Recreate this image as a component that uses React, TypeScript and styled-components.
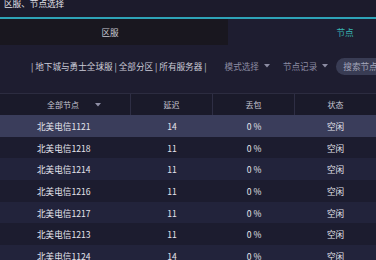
import React from 'react';
import styled, { createGlobalStyle } from 'styled-components';

const GlobalStyle = createGlobalStyle`
  html, body {
    margin: 0;
    padding: 0;
    background: #1e1d30;
    overflow: hidden;
  }
  body {
    font-family: "Noto Sans CJK SC", "Noto Sans", sans-serif;
  }
`;

const Page = styled.div`
  width: 462px;
  height: 260px;
  background: #1e1d30;
  color: #d8d8e2;
`;

const TitleBar = styled.div`
  height: 17px;
  overflow: hidden;
  background: #1c1b2c;
  border-bottom: 2px solid #2ea3b8;
  padding-left: 4px;
`;

const TitleText = styled.div`
  font-size: 8.6px;
  line-height: 12px;
  margin-top: -3px;
  color: #e2e2ea;
`;

const Tabs = styled.div`
  display: grid;
  grid-template-columns: 228px 1fr;
  height: 26px;
`;

const Tab = styled.div<{ $active?: boolean }>`
  display: flex;
  align-items: center;
  justify-content: center;
  font-size: 8.6px;
  padding-right: ${(p) => (p.$active ? '0' : '8px')};
  background: ${(p) => (p.$active ? '#1e1d30' : '#19171f')};
  color: ${(p) => (p.$active ? '#38b6b4' : '#c8c8d2')};
`;

const FilterBar = styled.div`
  height: 42px;
  display: flex;
  align-items: center;
  padding-left: 31px;
  font-size: 8.6px;
  white-space: nowrap;
`;

const Crumbs = styled.span`
  color: #ccccd8;
  margin-right: 18px;
`;

const Dropdown = styled.span`
  display: inline-flex;
  align-items: center;
  gap: 5px;
  color: #8c8ca2;
  margin-right: 13px;
  &:last-of-type {
    margin-right: 8px;
  }
`;

const SearchPill = styled.div`
  height: 17px;
  padding: 0 10px 0 7px;
  border-radius: 9px;
  background: #393c54;
  color: #a4a7bc;
  display: flex;
  align-items: center;
`;

const Table = styled.div`
  margin-top: 6px;
  width: 376px;
`;

const HeaderRow = styled.div`
  display: grid;
  grid-template-columns: 131px 82px 82px 81px;
  height: 22px;
  background: #1a1a2a;
  border-top: 1px solid #2c2c40;
  box-sizing: border-box;
`;

const HeadCell = styled.div`
  display: flex;
  align-items: center;
  justify-content: center;
  font-size: 8px;
  color: #c6c6d2;
  border-right: 1px solid #2e2e44;
  &:last-child {
    border-right: none;
  }
`;

const NodeHead = styled(HeadCell)`
  justify-content: flex-start;
  padding-left: 47px;
  gap: 16px;
`;

const Row = styled.div<{ $tone: 'sel' | 'odd' | 'even' }>`
  display: grid;
  grid-template-columns: 131px 82px 82px 81px;
  height: 21.7px;
  align-items: center;
  font-size: 8.6px;
  color: #e4e4ec;
  background: ${(p) =>
    p.$tone === 'sel' ? '#3a3d5b' : p.$tone === 'even' ? '#22233b' : '#1c1c2f'};
`;

const NameCell = styled.div`
  padding-left: 37px;
`;

const Cell = styled.div`
  text-align: center;
`;

const Caret = ({ color = '#8c8ca2' }: { color?: string }) => (
  <svg width="6" height="4" viewBox="0 0 6 4">
    <path d="M0 0 L6 0 L3 3.5 Z" fill={color} />
  </svg>
);

const nodes = [
  { name: '北美电信1121', delay: 14 },
  { name: '北美电信1218', delay: 11 },
  { name: '北美电信1214', delay: 11 },
  { name: '北美电信1216', delay: 11 },
  { name: '北美电信1217', delay: 11 },
  { name: '北美电信1213', delay: 11 },
  { name: '北美电信1124', delay: 14 },
];

const App: React.FC = () => {
  return (
    <Page>
      <GlobalStyle />
      <TitleBar>
        <TitleText>区服、节点选择</TitleText>
      </TitleBar>
      <Tabs>
        <Tab>区服</Tab>
        <Tab $active>节点</Tab>
      </Tabs>
      <FilterBar>
        <Crumbs>| 地下城与勇士全球服 | 全部分区 | 所有服务器 |</Crumbs>
        <Dropdown>
          模式选择 <Caret />
        </Dropdown>
        <Dropdown>
          节点记录 <Caret />
        </Dropdown>
        <SearchPill>搜索节点</SearchPill>
      </FilterBar>
      <Table>
        <HeaderRow>
          <NodeHead>
            全部节点 <Caret color="#9090a6" />
          </NodeHead>
          <HeadCell>延迟</HeadCell>
          <HeadCell>丢包</HeadCell>
          <HeadCell>状态</HeadCell>
        </HeaderRow>
        {nodes.map((n, i) => (
          <Row key={n.name} $tone={i === 0 ? 'sel' : i % 2 === 0 ? 'even' : 'odd'}>
            <NameCell>{n.name}</NameCell>
            <Cell>{n.delay}</Cell>
            <Cell>0 %</Cell>
            <Cell>空闲</Cell>
          </Row>
        ))}
      </Table>
    </Page>
  );
};

export default App;
